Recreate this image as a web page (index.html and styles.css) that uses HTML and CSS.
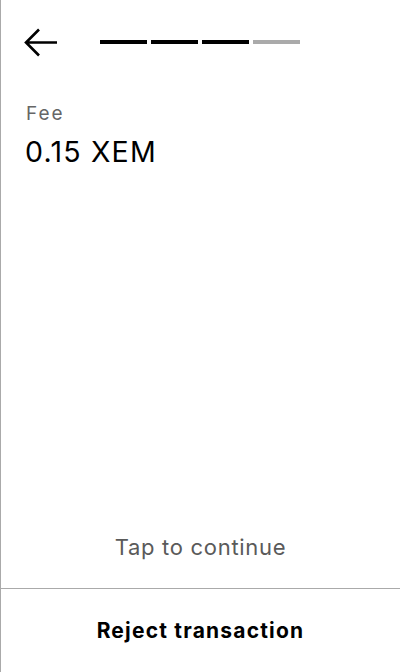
FILE: index.html
```html
<!DOCTYPE html>
<html>
<head>
<meta charset="utf-8">
<link rel="stylesheet" href="styles.css">
</head>
<body>
<div class="screen">
  <header class="header">
    <svg class="back" width="34" height="30" viewBox="0 0 34 30">
      <path d="M2 14.5 H33 M15 1.5 L2 14.5 L15 27.5" fill="none" stroke="#000" stroke-width="2.6"/>
    </svg>
    <div class="steps">
      <span class="step done"></span>
      <span class="step done"></span>
      <span class="step done"></span>
      <span class="step"></span>
    </div>
  </header>
  <main class="content">
    <div class="label">Fee</div>
    <div class="value">0.15 XEM</div>
  </main>
  <div class="tap">Tap to continue</div>
  <div class="reject">Reject transaction</div>
</div>
</body>
</html>
```
FILE: styles.css
```css
html, body {
  margin: 0;
  padding: 0;
  background: #fff;
}
body {
  font-family: Inter, "Noto Sans", sans-serif;
}
.screen {
  width: 399px;
  height: 672px;
  border-left: 1px solid #aaa;
  display: flex;
  flex-direction: column;
}
.header {
  display: flex;
  align-items: center;
  height: 86px;
  padding-left: 23px;
  box-sizing: border-box;
}
.back {
  display: block;
}
.steps {
  display: flex;
  gap: 4px;
  margin-left: 42px;
  margin-top: -2px;
}
.step {
  width: 47px;
  height: 4px;
  background: #aaa;
}
.step.done {
  background: #000;
}
.content {
  flex: 1;
  padding: 16px 0 0 25px;
}
.label {
  font-size: 19px;
  letter-spacing: 2px;
  color: #666;
  line-height: 24px;
}
.value {
  font-size: 28.5px;
  letter-spacing: 1.2px;
  color: #000;
  line-height: 36px;
  margin-top: 8px;
  margin-left: -1px;
}
.tap {
  text-align: center;
  font-size: 22px;
  letter-spacing: 0.7px;
  color: #5a5a5a;
  line-height: 24px;
  padding-bottom: 29px;
}
.reject {
  border-top: 1px solid #aaa;
  height: 83px;
  display: flex;
  align-items: center;
  justify-content: center;
  font-size: 21px;
  font-weight: 700;
  letter-spacing: 1.2px;
  color: #000;
}
```
